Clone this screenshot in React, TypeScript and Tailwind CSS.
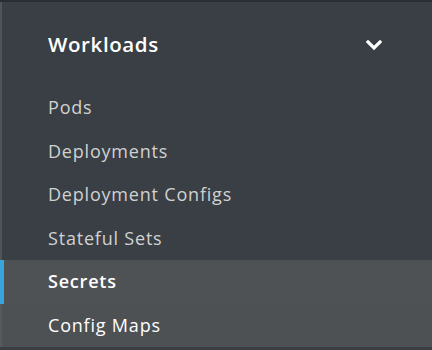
import React from 'react';

const items = [
    { label: 'Pods' },
    { label: 'Deployments' },
    { label: 'Deployment Configs' },
    { label: 'Stateful Sets' },
    { label: 'Secrets', active: true },
    { label: 'Config Maps', hover: true },
];

const App: React.FC = () => {
    return (
        <div
            className="w-[432px] h-[350px] overflow-hidden bg-[#393f44] border-t-2 border-[#292e34] flex flex-col"
            style={{ fontFamily: '"Open Sans", "Liberation Sans", sans-serif' }}
        >
            {/* Section heading */}
            <div className="h-[84px] shrink-0 flex items-center justify-between border-l-2 border-[#4f5459] pl-[46px] pr-[50px]">
                <span className="text-[20.5px] font-semibold text-white tracking-[0.6px]">Workloads</span>
                <svg width="16" height="12" viewBox="0 0 16 12" className="mt-[2px]">
                    <polyline points="2,3 8,9 14,3" fill="none" stroke="#fff" strokeWidth="3.2" strokeLinecap="square" />
                </svg>
            </div>

            {/* Nav items */}
            {items.map((item) => (
                <div
                    key={item.label}
                    className={`h-[43.5px] shrink-0 flex items-center pl-[46px] text-[18px] tracking-[0.8px] ${
                        item.active
                            ? 'bg-[#4f5255] border-l-[4px] border-[#39a5dc] !pl-[44px] text-white font-semibold'
                            : item.hover
                            ? 'bg-[#4d5154] border-l-2 border-[#56595d] text-white'
                            : 'border-l-2 border-[#4f5459] text-[#d1d1d1]'
                    }`}
                >
                    {item.label}
                </div>
            ))}
            <div className="flex-1 bg-[#3a3e42]" />
        </div>
    );
};

export default App;
